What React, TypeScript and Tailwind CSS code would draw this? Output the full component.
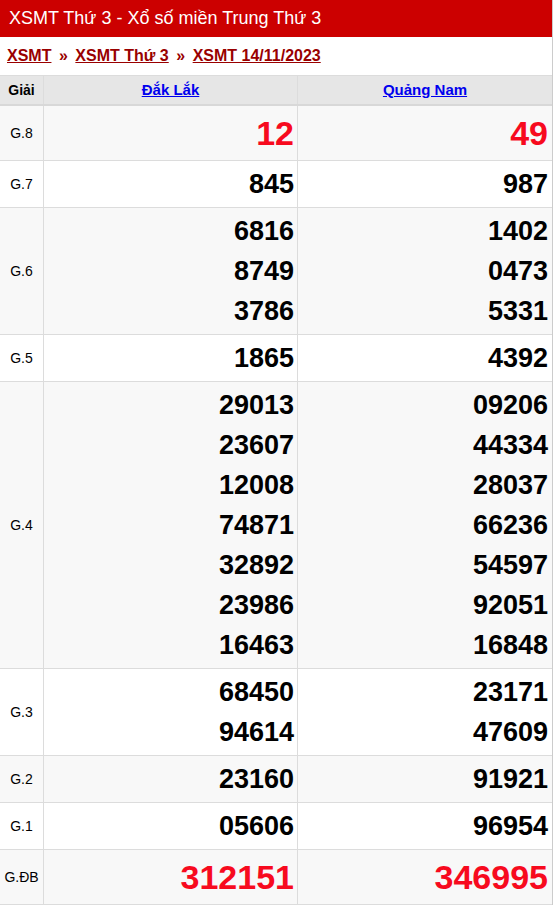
import React from "react";

type Row = { label: string; a: string[]; b: string[]; red?: boolean; tall?: boolean };

const rows: Row[] = [
  { label: "G.8", a: ["12"], b: ["49"], red: true, tall: true },
  { label: "G.7", a: ["845"], b: ["987"] },
  { label: "G.6", a: ["6816", "8749", "3786"], b: ["1402", "0473", "5331"] },
  { label: "G.5", a: ["1865"], b: ["4392"] },
  {
    label: "G.4",
    a: ["29013", "23607", "12008", "74871", "32892", "23986", "16463"],
    b: ["09206", "44334", "28037", "66236", "54597", "92051", "16848"],
  },
  { label: "G.3", a: ["68450", "94614"], b: ["23171", "47609"] },
  { label: "G.2", a: ["23160"], b: ["91921"] },
  { label: "G.1", a: ["05606"], b: ["96954"] },
  { label: "G.ĐB", a: ["312151"], b: ["346995"], red: true, tall: true },
];

function NumCell({ nums, red, tall, last }: { nums: string[]; red?: boolean; tall?: boolean; last?: boolean }) {
  return (
    <div
      className={
        (last ? "w-[254px] pr-[4px] " : "w-[254px] pr-[3px] border-r border-[#dcdcdc] ") +
        (tall ? "h-[54px] flex flex-col justify-center " : "py-[3px] ") +
        "text-right font-bold"
      }
    >
      {nums.map((n) => (
        <div
          key={n}
          className={
            (red ? "text-[34px] text-[#f70a1e] " : "text-[27px] text-black ") +
            "leading-[40px]"
          }
        >
          {n}
        </div>
      ))}
    </div>
  );
}

export default function App() {
  return (
    <div className="w-[553px] border-r border-[#cccccc] bg-white font-['Liberation_Sans',Arial,sans-serif] text-black">
      <div className="h-[37px] bg-[#cc0000] text-white text-[18px] pl-[9px] flex items-center">
        XSMT Thứ 3 - Xổ số miền Trung Thứ 3
      </div>
      <div className="h-[38px] flex items-center pl-[7px] text-[16px] font-bold text-[#990000]">
        <span className="underline">XSMT</span>
        <span className="px-[7.5px]">»</span>
        <span className="underline">XSMT Thứ 3</span>
        <span className="px-[7.5px]">»</span>
        <span className="underline">XSMT 14/11/2023</span>
      </div>
      <div className="border-t border-[#dcdcdc]">
        <div className="flex h-[30px] bg-[#e6e6e6] border-b-2 border-[#d8d8d8] text-[14px] font-bold">
          <div className="w-[44px] border-r border-[#dcdcdc] flex items-center justify-center">Giải</div>
          <div className="w-[254px] border-r border-[#dcdcdc] flex items-center justify-center">
            <span className="underline text-[#0000ee] text-[15px]">Đắk Lắk</span>
          </div>
          <div className="w-[254px] flex items-center justify-center">
            <span className="underline text-[#0000ee] text-[15px]">Quảng Nam</span>
          </div>
        </div>
        {rows.map((r, i) => (
          <div
            key={r.label}
            className={"flex border-b border-[#dcdcdc] " + (i % 2 === 0 ? "bg-[#f8f8f8]" : "bg-white")}
          >
            <div className="w-[44px] border-r border-[#dcdcdc] flex items-center justify-center text-[14px]">
              {r.label}
            </div>
            <NumCell nums={r.a} red={r.red} tall={r.tall} />
            <NumCell nums={r.b} red={r.red} tall={r.tall} last />
          </div>
        ))}
      </div>
    </div>
  );
}
